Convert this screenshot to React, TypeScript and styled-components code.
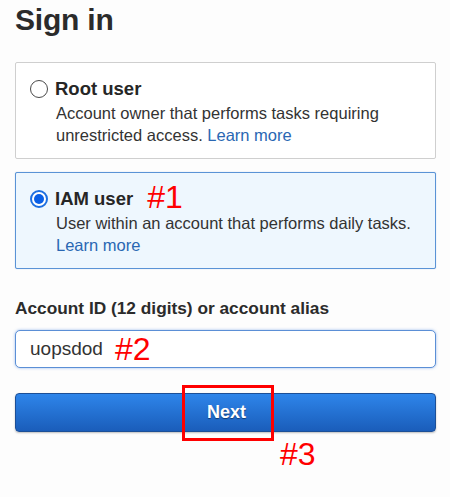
import React from "react";
import styled, { createGlobalStyle } from "styled-components";

const GlobalStyle = createGlobalStyle`
  html, body { margin: 0; padding: 0; background: #fdfdfd; }
  body { font-family: "Liberation Sans", Arial, sans-serif; color: #2f2f2f; }
`;

const Page = styled.div`
  box-sizing: border-box;
  width: 450px;
  min-height: 497px;
  padding: 3px 14px 0 15px;
  display: flex;
  flex-direction: column;
`;

const Title = styled.h1`
  margin: 0;
  font-size: 30px;
  line-height: 34px;
  font-weight: 700;
  color: #2b2b2b;
  letter-spacing: -0.2px;
`;

const Options = styled.div`
  display: flex;
  flex-direction: column;
  gap: 13px;
  margin-top: 25px;
`;

const Card = styled.div<{ $selected?: boolean }>`
  box-sizing: border-box;
  height: 97px;
  display: flex;
  gap: 7px;
  padding: 16px 14px 0 14px;
  border: 1px solid ${(p) => (p.$selected ? "#5a93d6" : "#cfcfcf")};
  border-radius: 2px;
  background: ${(p) => (p.$selected ? "#eef7fe" : "#ffffff")};
  box-shadow: ${(p) => (p.$selected ? "0 0 1px rgba(60,120,200,0.5)" : "none")};
`;

const Radio = styled.span<{ $checked?: boolean }>`
  box-sizing: border-box;
  flex: none;
  width: 18px;
  height: 18px;
  margin-top: 1px;
  border-radius: 50%;
  border: ${(p) => (p.$checked ? "2px solid #1d6fe0" : "1px solid #4a4a4a")};
  background: #fff;
  display: flex;
  align-items: center;
  justify-content: center;
  &::after {
    content: "";
    display: ${(p) => (p.$checked ? "block" : "none")};
    width: 10px;
    height: 10px;
    border-radius: 50%;
    background: #0a5fe6;
  }
`;

const CardBody = styled.div`
  display: flex;
  flex-direction: column;
`;

const OptionTitle = styled.div`
  display: flex;
  align-items: center;
  height: 20px;
  font-size: 18.5px;
  font-weight: 700;
  line-height: 20px;
  color: #262626;
`;

const Annotation = styled.span`
  font-family: "Liberation Sans", Arial, sans-serif;
  font-weight: 400;
  font-size: 32px;
  line-height: 20px;
  color: #ff0000;
`;

const TitleAnnotation = styled(Annotation)`
  margin-left: 14px;
  margin-top: -4px;
`;

const Desc = styled.div`
  font-size: 16.5px;
  line-height: 22px;
  color: #333;
  margin-top: 3px;
  padding-left: 1px;
`;

const Link = styled.a`
  color: #2a67b3;
  text-decoration: none;
`;

const Label = styled.label`
  margin-top: 29px;
  font-size: 17.3px;
  font-weight: 700;
  line-height: 20px;
  color: #2b2b2b;
`;

const Field = styled.div`
  box-sizing: border-box;
  margin-top: 12px;
  height: 38px;
  display: flex;
  align-items: center;
  gap: 12px;
  padding: 0 14px;
  border: 1px solid #5b8fd6;
  border-radius: 5px;
  background: #fff;
  box-shadow: 0 0 3px rgba(70, 130, 220, 0.55);
`;

const FieldValue = styled.span`
  font-size: 19px;
  color: #333;
`;

const ButtonWrap = styled.div`
  position: relative;
  margin-top: 25px;
`;

const Button = styled.button`
  box-sizing: border-box;
  display: block;
  width: 100%;
  height: 39px;
  border: 1px solid #1c4f97;
  border-radius: 4px;
  background: linear-gradient(#2e85ea, #1a5dba);
  color: #fff;
  font-family: "Liberation Sans", Arial, sans-serif;
  font-size: 18px;
  font-weight: 700;
  text-shadow: 0 1px 1px rgba(0, 0, 0, 0.45);
  box-shadow: 0 1px 2px rgba(0, 0, 0, 0.25);
  padding: 0 0 0 2px;
`;

const Highlight = styled.div`
  position: absolute;
  left: 167px;
  top: -8px;
  width: 86px;
  height: 50px;
  border: 3px solid #ff0000;
  pointer-events: none;
`;

const StepLabel = styled(Annotation)`
  position: absolute;
  left: 265px;
  top: 45px;
  line-height: 1;
`;

export default function App() {
  return (
    <>
      <GlobalStyle />
      <Page>
        <Title>Sign in</Title>
        <Options>
          <Card>
            <Radio />
            <CardBody>
              <OptionTitle>Root user</OptionTitle>
              <Desc>
                Account owner that performs tasks requiring
                <br />
                unrestricted access. <Link href="#">Learn more</Link>
              </Desc>
            </CardBody>
          </Card>
          <Card $selected>
            <Radio $checked />
            <CardBody>
              <OptionTitle>
                IAM user<TitleAnnotation>#1</TitleAnnotation>
              </OptionTitle>
              <Desc>
                User within an account that performs daily tasks.
                <br />
                <Link href="#">Learn more</Link>
              </Desc>
            </CardBody>
          </Card>
        </Options>
        <Label>Account ID (12 digits) or account alias</Label>
        <Field>
          <FieldValue>uopsdod</FieldValue>
          <Annotation>#2</Annotation>
        </Field>
        <ButtonWrap>
          <Button>Next</Button>
          <Highlight />
          <StepLabel>#3</StepLabel>
        </ButtonWrap>
      </Page>
    </>
  );
}
